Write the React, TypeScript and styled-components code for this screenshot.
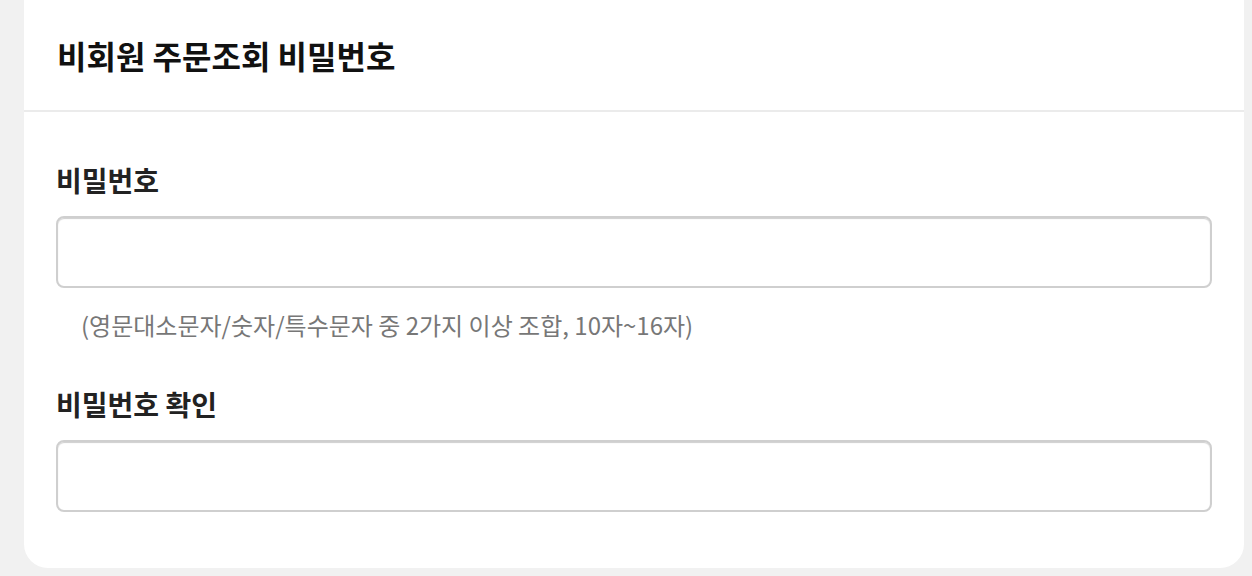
import * as React from 'react';
import styled, { createGlobalStyle } from 'styled-components';

const GlobalStyle = createGlobalStyle`
    html, body {
        margin: 0;
        padding: 0;
        background: #f1f1f1;
    }
    body {
        font-family: 'Noto Sans CJK KR', 'Noto Sans', sans-serif;
        color: #1a1a1a;
    }
`;

const Page = styled.div`
    padding: 0 8px 8px 24px;
`;

const Card = styled.section`
    background: #fff;
    border-radius: 0 0 24px 24px;
`;

const CardHeader = styled.header`
    display: flex;
    align-items: center;
    height: 112px;
    padding: 0 33px;
    border-bottom: 2px solid #ebebeb;
    box-sizing: border-box;
`;

const Title = styled.h1`
    margin: 0;
    font-size: 32px;
    font-weight: 700;
    color: #111;
`;

const CardBody = styled.div`
    display: flex;
    flex-direction: column;
    padding: 48px 32px 56px 32px;
`;

const Field = styled.div<{ $spaced?: boolean }>`
    display: flex;
    flex-direction: column;
    margin-top: ${(p) => (p.$spaced ? '42px' : '0')};
`;

const Label = styled.label`
    font-size: 28px;
    font-weight: 700;
    line-height: 40px;
    color: #222;
`;

const Input = styled.input`
    margin-top: 16px;
    height: 72px;
    box-sizing: border-box;
    border: 2px solid #cfcfcf;
    border-radius: 8px;
    box-shadow: inset 0 1px 1px #cfcfcf;
    padding: 0 20px;
    font-size: 24px;
    font-family: inherit;
    outline: none;
    background: #fff;
`;

const Hint = styled.p`
    margin: 20px 0 0;
    padding-left: 25px;
    font-size: 24px;
    line-height: 34px;
    color: #777;
`;

const App: React.FC = () => {
    return (
        <Page>
            <GlobalStyle />
            <Card>
                <CardHeader>
                    <Title>비회원 주문조회 비밀번호</Title>
                </CardHeader>
                <CardBody>
                    <Field>
                        <Label htmlFor="pw">비밀번호</Label>
                        <Input id="pw" type="password" />
                        <Hint>(영문대소문자/숫자/특수문자 중 2가지 이상 조합, 10자~16자)</Hint>
                    </Field>
                    <Field $spaced>
                        <Label htmlFor="pw-confirm">비밀번호 확인</Label>
                        <Input id="pw-confirm" type="password" />
                    </Field>
                </CardBody>
            </Card>
        </Page>
    );
};

export default App;
